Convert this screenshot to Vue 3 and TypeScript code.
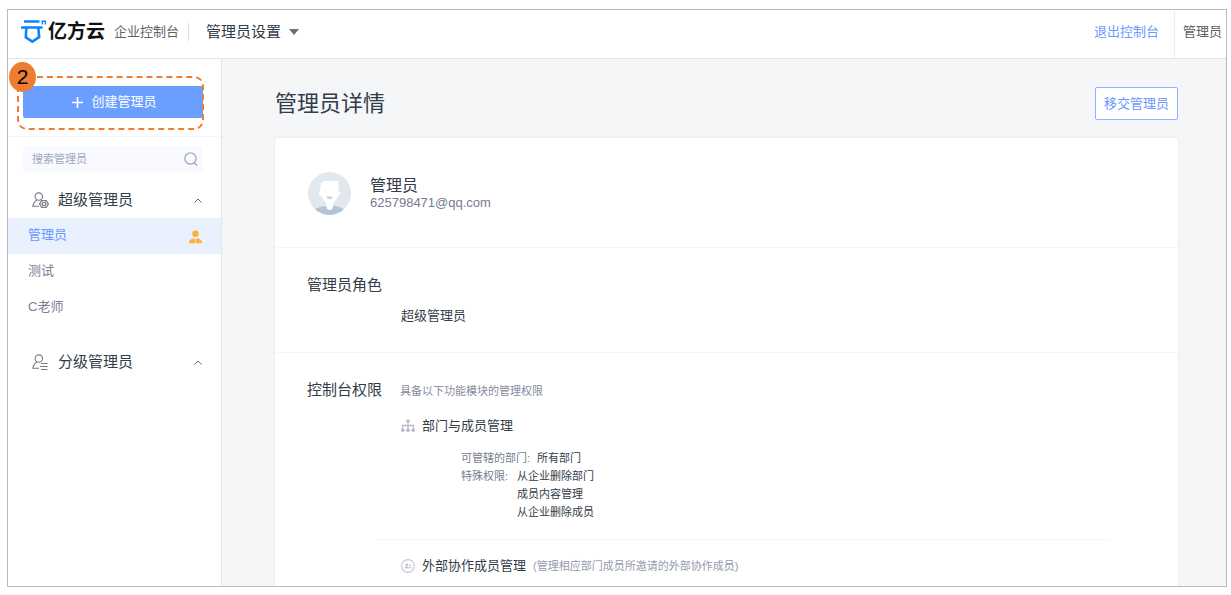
<script setup lang="ts">
import { ref } from 'vue'

interface Group {
  id: string
  name: string
  members: string[]
}

const groups: Group[] = [
  { id: 'super', name: '超级管理员', members: ['管理员', '测试', 'C老师'] },
  { id: 'graded', name: '分级管理员', members: [] },
]
const selected = ref('管理员')
const keyword = ref('')
const special = ['从企业删除部门', '成员内容管理', '从企业删除成员']
</script>

<template>
  <div class="frame">
    <header class="topbar">
      <a class="logo" href="#">
        <svg width="27" height="26" viewBox="0 0 27 26" fill="none" stroke="#0a84ff" aria-hidden="true">
          <path d="M4 2.500H19.500M1 8.500H22.500" stroke-width="2.400" />
          <path d="M6.300 9L5.800 18.300L12.300 22.600L19.200 18L18.300 9" stroke-width="2.600" />
          <path d="M22.300 5.500V2.200H25.200V5.500" stroke-width="1.400" />
        </svg>
        <span class="brand">亿方云</span>
      </a>
      <span class="product">企业控制台</span>
      <button class="section-menu" type="button">
        管理员设置
        <svg width="10" height="6" viewBox="0 0 10 6" aria-hidden="true"><path d="M0 0H10L5 6Z" fill="#707070" /></svg>
      </button>
      <a class="exit" href="#">退出控制台</a>
      <a class="account" href="#">管理员</a>
    </header>

    <div class="body">
      <aside class="sidebar">
        <div class="create-area">
          <button class="create" type="button">
            <svg width="11" height="11" viewBox="0 0 11 11" stroke="#fff" stroke-width="1.600" aria-hidden="true"><path d="M5.500 0V11M0 5.500H11" /></svg>
            创建管理员
          </button>
          <div class="callout"></div>
          <span class="step">2</span>
        </div>

        <label class="search">
          <input v-model="keyword" type="text" placeholder="搜索管理员" aria-label="搜索管理员" />
          <svg width="14" height="14" viewBox="0 0 14 14" fill="none" stroke="#a3abbd" stroke-width="1.400" aria-hidden="true">
            <circle cx="6.500" cy="6.500" r="5.600" /><path d="M10.300 10.800L13 13.500" />
          </svg>
        </label>

        <section v-for="g in groups" :key="g.id" class="group">
          <button class="group-head" type="button">
            <svg width="17" height="17" viewBox="0 0 17 17" fill="none" stroke="#777c82" stroke-width="1.100" aria-hidden="true">
              <circle cx="6.800" cy="4.600" r="3.700" />
              <path d="M4.800 7.900C2.500 9.200 1.300 11.500 .8 14.300H7" />
              <template v-if="g.id === 'super'">
                <path d="M9.600 8.500H14.200L16.500 12L14.200 15.500H9.600L7.500 12Z" />
                <circle cx="12" cy="12" r="1.700" />
                <path d="M9.600 8.500L10.800 10.800M14.200 8.500L13.200 10.800M16.500 12H13.700M14.200 15.500L13.200 13.300M9.600 15.500L10.800 13.300M7.500 12H10.300" stroke-width=".8" />
              </template>
              <path v-else d="M9 9.500H15.500M8 12.500H15.500M9 15.500H15.500" />
            </svg>
            <span>{{ g.name }}</span>
            <svg class="chevron" width="8" height="5" viewBox="0 0 8 5" fill="none" stroke="#666" aria-hidden="true"><path d="M.5 4.500L4 1L7.500 4.500" /></svg>
          </button>
          <ul v-if="g.members.length">
            <li v-for="m in g.members" :key="m">
              <button class="member" :class="{ active: m === selected }" type="button" @click="selected = m">
                {{ m }}
                <svg v-if="m === '管理员'" width="13" height="18" viewBox="0 0 13 18" fill="#ffb03a" aria-hidden="true">
                  <circle cx="6.500" cy="7.700" r="3.200" />
                  <path d="M0 17.300C0 14 2 12.600 5 12.300L6.200 13.800V17.300ZM13 17.300C13 14 11 12.600 8 12.300L6.800 13.800V17.300Z" />
                </svg>
              </button>
            </li>
          </ul>
        </section>
      </aside>

      <main class="main">
        <div class="title-row">
          <h1>管理员详情</h1>
          <button class="transfer" type="button">移交管理员</button>
        </div>

        <article class="card">
          <section class="profile">
            <svg width="43" height="43" viewBox="0 0 43 43" aria-hidden="true">
              <defs><clipPath id="avatar-clip"><circle cx="21.500" cy="21.500" r="21.500" /></clipPath></defs>
              <g clip-path="url(#avatar-clip)">
                <rect width="43" height="43" fill="#e1e8ee" />
                <path d="M6 39C9 35 14 34.500 18 34H26C30 34.500 34 35 37 39V43H6Z" fill="#b5c4d1" />
                <path d="M12.500 18V14Q13 9 18 9H30.500V19Q33 19.500 32 22Q31.500 24 30 24Q28.500 28 25.500 30.500L24.800 35Q24.500 38 21.700 38Q19 38 18.500 35L18 30.500Q14.500 28 13.500 24Q11.500 24 11 21.500Q10.500 19.500 12.500 18Z" fill="#fff" />
                <path d="M18.500 24.500H24.500Q24 27.300 21.500 27.300Q19 27.300 18.500 24.500Z" fill="#c5d1dc" />
              </g>
            </svg>
            <div>
              <div class="name">管理员</div>
              <div class="email">625798471@qq.com</div>
            </div>
          </section>

          <section class="role">
            <h2>管理员角色</h2>
            <p>超级管理员</p>
          </section>

          <section class="rights">
            <h2>控制台权限</h2>
            <div class="modules">
              <p class="note">具备以下功能模块的管理权限</p>
              <div class="module">
                <h3>
                  <svg width="14" height="14" viewBox="0 0 14 14" fill="none" stroke="#b6bace" aria-hidden="true">
                    <path d="M7 3V11M1.500 11V6.500H12.500V11" stroke-width="1.300" />
                    <g fill="#b6bace" stroke="none"><circle cx="7" cy="2" r="1.800" /><circle cx="1.800" cy="11.200" r="1.800" /><circle cx="7" cy="11.200" r="1.800" /><circle cx="12.200" cy="11.200" r="1.800" /></g>
                  </svg>
                  部门与成员管理
                </h3>
                <dl>
                  <div class="near"><dt>可管辖的部门:</dt><dd>所有部门</dd></div>
                  <div>
                    <dt>特殊权限:</dt>
                    <dd><div v-for="s in special" :key="s">{{ s }}</div></dd>
                  </div>
                </dl>
              </div>
              <div class="module external">
                <h3>
                  <svg width="14" height="14" viewBox="0 0 14 14" fill="none" stroke="#c3c6d8" aria-hidden="true">
                    <circle cx="7" cy="7" r="6.400" stroke-width="1.100" />
                    <g fill="#b9bdd1" stroke="none"><circle cx="5.700" cy="5.700" r="1.300" /><path d="M3.500 9.300Q3.500 7.500 5.700 7.500T8 9.300Z" /><circle cx="9" cy="6.300" r=".9" /><path d="M8.500 9.300V7.800Q10.700 7.600 10.700 9.300Z" /></g>
                  </svg>
                  外部协作成员管理
                  <small>(管理相应部门成员所邀请的外部协作成员)</small>
                </h3>
              </div>
            </div>
          </section>
        </article>
      </main>
    </div>
  </div>
</template>

<style>
body {
  margin: 0;
  background: #fff;
}
</style>

<style scoped>
* {
  box-sizing: border-box;
}
.frame {
  display: flex;
  flex-direction: column;
  height: calc(100vh - 17px);
  margin: 9px 4px 8px 7px;
  border: 1px solid #bbb;
  overflow: hidden;
  background: #fff;
  color: #333c48;
  font-family: "Liberation Sans", "Noto Sans CJK SC", sans-serif;
  font-size: 13px;
  font-weight: 400;
  line-height: 18px;
}
button,
input {
  margin: 0;
  padding: 0;
  border: 0;
  background: none;
  color: inherit;
  font: inherit;
  text-align: left;
}
button {
  cursor: pointer;
}
a {
  color: inherit;
  text-decoration: none;
}
h1, h2, h3, p, ul, dl, dd {
  margin: 0;
  padding: 0;
  font-weight: 400;
}
ul {
  list-style: none;
}
svg {
  flex: none;
}
.topbar {
  display: flex;
  align-items: center;
  flex: none;
  height: 49px;
  padding: 0 4px 5px 12px;
  border-bottom: 1px solid #e5e5e5;
}
.logo {
  display: flex;
  align-items: center;
  gap: 1px;
}
.brand {
  color: #111;
  font-size: 19px;
  font-weight: 700;
  line-height: 24px;
}
.product {
  margin-left: 9px;
  padding-right: 9px;
  border-right: 1px solid #ddd;
  color: #5f6368;
}
.section-menu {
  display: flex;
  align-items: center;
  gap: 8px;
  margin-left: 17px;
  font-size: 15px;
}
.exit {
  margin-left: auto;
  color: #6b9bff;
}
.account {
  align-self: stretch;
  display: flex;
  align-items: center;
  margin: 0 0 -5px 15px;
  padding: 0 0 5px 8px;
  border-left: 1px solid #eee;
  color: #5c5c5c;
}
.body {
  display: flex;
  flex: 1;
  min-height: 0;
}
.sidebar {
  flex: none;
  width: 214px;
  border-right: 1px solid #e3e5e8;
}
.create-area {
  position: relative;
  padding: 27px 18px 18px 15px;
  border-bottom: 1px solid #f5f6f8;
}
.create {
  display: flex;
  align-items: center;
  justify-content: center;
  gap: 8px;
  width: 100%;
  height: 32px;
  padding-left: 3px;
  border-radius: 2px;
  background: #6b9fff;
  color: #fff;
}
.callout {
  position: absolute;
  inset: 17px 17px 6px 9px;
  border: 2px dashed #ec7d31;
  border-radius: 10px;
  pointer-events: none;
}
.step {
  position: absolute;
  top: 3px;
  left: 1px;
  width: 27px;
  height: 30px;
  border-radius: 50%;
  background: #ed7d31;
  color: #000;
  font-size: 21px;
  line-height: 30px;
  text-align: center;
}
.search {
  display: flex;
  align-items: center;
  height: 26px;
  margin: 9px 18px 10px 15px;
  padding: 0 5px 0 9px;
  border-radius: 3px;
  background: #f8faff;
}
.search input {
  flex: 1;
  min-width: 0;
  outline: 0;
  font-size: 11px;
}
.search input::placeholder {
  color: #a0a8ba;
  opacity: 1;
}
.group {
  margin-bottom: 18px;
}
.group-head {
  display: flex;
  align-items: center;
  gap: 9px;
  width: 100%;
  height: 36px;
  padding: 0 19px 0 24px;
  font-size: 15px;
}
.chevron {
  margin-left: auto;
}
.member {
  display: flex;
  align-items: center;
  justify-content: space-between;
  width: 100%;
  height: 36px;
  padding: 0 19px 2px 20px;
  color: #7a8195;
}
.member.active {
  background: #e9f1ff;
  color: #6b95ff;
}
.main {
  flex: 1;
  min-width: 0;
  padding: 28px 48px 0 53px;
  background: #f5f6f8;
}
.title-row {
  display: flex;
  align-items: center;
  justify-content: space-between;
  margin-bottom: 18px;
}
h1 {
  font-size: 22px;
  line-height: 32px;
}
.transfer {
  height: 33px;
  padding: 0 8px;
  border: 1px solid #8eb4ff;
  border-radius: 2px;
  background: #fff;
  color: #6b95ff;
}
.card {
  min-height: 460px;
  border-radius: 3px;
  background: #fff;
  box-shadow: 0 0 3px rgba(0, 0, 0, 0.08);
}
.profile {
  display: flex;
  align-items: center;
  gap: 19px;
  height: 110px;
  padding: 2px 0 0 33px;
  border-bottom: 1px solid #f5f6f8;
}
.name {
  font-size: 16px;
}
.email {
  color: #747b8f;
  line-height: 16px;
}
h2 {
  font-size: 15px;
  line-height: 20px;
}
.role {
  height: 105px;
  padding: 27px 0 0 32px;
  border-bottom: 1px solid #f5f6f8;
}
.role p {
  margin: 12px 0 0 94px;
}
.rights {
  display: flex;
  padding: 27px 67px 0 32px;
}
.rights h2 {
  flex: none;
  width: 69px;
  white-space: nowrap;
}
.modules {
  flex: 1;
}
.note {
  margin: 2px 0 17px 24px;
  color: #868ca0;
  font-size: 11px;
}
h3 {
  display: flex;
  align-items: center;
  gap: 7px;
  padding-left: 25px;
  font-size: 13px;
}
.module {
  padding-bottom: 18px;
}
dl {
  margin: 14px 0 0 85px;
  font-size: 11px;
}
dl > div {
  display: flex;
  gap: 9px;
}
dl > .near {
  gap: 7px;
}
dt {
  color: #747b8f;
}
.external {
  padding-top: 17px;
  border-top: 1px solid #f5f6f8;
}
small {
  color: #9499ae;
  font-size: 11px;
}
</style>
